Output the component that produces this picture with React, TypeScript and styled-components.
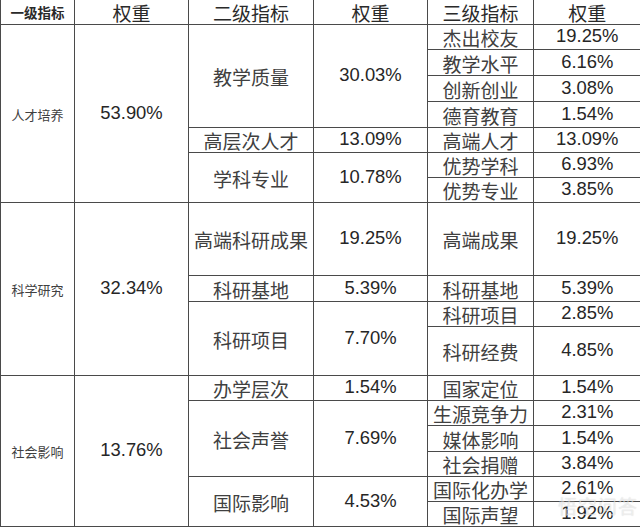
import React from "react";
import styled, { createGlobalStyle } from "styled-components";

const GlobalStyle = createGlobalStyle`
  html, body {
    margin: 0;
    padding: 0;
    background: #fff;
  }
  body {
    font-family: "Liberation Sans", "Noto Sans CJK SC", sans-serif;
  }
`;

const Root = styled.div`
  position: relative;
  width: 640px;
  height: 527px;
  overflow: hidden;
  background: #fff;
`;

const Table = styled.table`
  border-collapse: collapse;
  table-layout: fixed;
  width: 640px;
`;

const Row = styled.tr<{ $h: number }>`
  height: ${(p) => p.$h}px;
`;

const Cell = styled.td<{ $kind?: "small" | "text" | "num" }>`
  padding: ${(p) => (p.$kind === "num" ? "0" : "2px 0 0")};
  border: 1px solid #4a4a4a;
  text-align: center;
  vertical-align: middle;
  line-height: 1;
  white-space: nowrap;
  color: ${(p) => (p.$kind === "num" ? "#262626" : "#404040")};
  font-family: ${(p) =>
    p.$kind === "num"
      ? `"Liberation Sans", Arial, sans-serif`
      : `"Noto Sans CJK SC", "Liberation Sans", sans-serif`};
  font-size: ${(p) =>
    p.$kind === "small" ? "13px" : p.$kind === "num" ? "18.4px" : "19px"};
  tr > &:last-child {
    border-right: none;
  }
`;

const Head = styled.th<{ $small?: boolean }>`
  padding: 1px 0 0;
  border: 1px solid #4a4a4a;
  border-top: none;
  text-align: center;
  vertical-align: middle;
  line-height: 1;
  white-space: nowrap;
  color: #2a2a2a;
  font-family: "Noto Sans CJK SC", "Liberation Sans", sans-serif;
  font-weight: ${(p) => (p.$small ? 700 : 400)};
  font-size: ${(p) => (p.$small ? "13.5px" : "19px")};
  tr > &:last-child {
    border-right: none;
  }
`;

const Watermark = styled.div`
  position: absolute;
  right: 2px;
  bottom: 12px;
  font-family: "Noto Sans CJK SC", sans-serif;
  font-size: 19px;
  line-height: 1;
  color: rgba(255, 255, 255, 0.55);
  text-shadow: 0 0 1px rgba(0, 0, 0, 0.18);
  letter-spacing: 1px;
  pointer-events: none;
`;

const widths = [74, 114, 125, 114, 106, 107];

export default function App(): JSX.Element {
  return (
    <Root>
      <GlobalStyle />
      <Table>
        <colgroup>
          {widths.map((w, i) => (
            <col key={i} style={{ width: w }} />
          ))}
        </colgroup>
        <thead>
          <Row $h={24}>
            <Head $small>一级指标</Head>
            <Head>权重</Head>
            <Head>二级指标</Head>
            <Head>权重</Head>
            <Head>三级指标</Head>
            <Head>权重</Head>
          </Row>
        </thead>
        <tbody>
          <Row $h={25}>
            <Cell $kind="small" rowSpan={7}>人才培养</Cell>
            <Cell $kind="num" rowSpan={7}>53.90%</Cell>
            <Cell rowSpan={4}>教学质量</Cell>
            <Cell $kind="num" rowSpan={4}>30.03%</Cell>
            <Cell>杰出校友</Cell>
            <Cell $kind="num">19.25%</Cell>
          </Row>
          <Row $h={26}>
            <Cell>教学水平</Cell>
            <Cell $kind="num">6.16%</Cell>
          </Row>
          <Row $h={26}>
            <Cell>创新创业</Cell>
            <Cell $kind="num">3.08%</Cell>
          </Row>
          <Row $h={26}>
            <Cell>德育教育</Cell>
            <Cell $kind="num">1.54%</Cell>
          </Row>
          <Row $h={25}>
            <Cell>高层次人才</Cell>
            <Cell $kind="num">13.09%</Cell>
            <Cell>高端人才</Cell>
            <Cell $kind="num">13.09%</Cell>
          </Row>
          <Row $h={25}>
            <Cell rowSpan={2}>学科专业</Cell>
            <Cell $kind="num" rowSpan={2}>10.78%</Cell>
            <Cell>优势学科</Cell>
            <Cell $kind="num">6.93%</Cell>
          </Row>
          <Row $h={25}>
            <Cell>优势专业</Cell>
            <Cell $kind="num">3.85%</Cell>
          </Row>

          <Row $h={73}>
            <Cell $kind="small" rowSpan={4}>科学研究</Cell>
            <Cell $kind="num" rowSpan={4}>32.34%</Cell>
            <Cell>高端科研成果</Cell>
            <Cell $kind="num">19.25%</Cell>
            <Cell>高端成果</Cell>
            <Cell $kind="num">19.25%</Cell>
          </Row>
          <Row $h={26}>
            <Cell>科研基地</Cell>
            <Cell $kind="num">5.39%</Cell>
            <Cell>科研基地</Cell>
            <Cell $kind="num">5.39%</Cell>
          </Row>
          <Row $h={25}>
            <Cell rowSpan={2}>科研项目</Cell>
            <Cell $kind="num" rowSpan={2}>7.70%</Cell>
            <Cell>科研项目</Cell>
            <Cell $kind="num">2.85%</Cell>
          </Row>
          <Row $h={49}>
            <Cell>科研经费</Cell>
            <Cell $kind="num">4.85%</Cell>
          </Row>

          <Row $h={25}>
            <Cell $kind="small" rowSpan={6}>社会影响</Cell>
            <Cell $kind="num" rowSpan={6}>13.76%</Cell>
            <Cell>办学层次</Cell>
            <Cell $kind="num">1.54%</Cell>
            <Cell>国家定位</Cell>
            <Cell $kind="num">1.54%</Cell>
          </Row>
          <Row $h={25}>
            <Cell rowSpan={3}>社会声誉</Cell>
            <Cell $kind="num" rowSpan={3}>7.69%</Cell>
            <Cell>生源竞争力</Cell>
            <Cell $kind="num">2.31%</Cell>
          </Row>
          <Row $h={26}>
            <Cell>媒体影响</Cell>
            <Cell $kind="num">1.54%</Cell>
          </Row>
          <Row $h={25}>
            <Cell>社会捐赠</Cell>
            <Cell $kind="num">3.84%</Cell>
          </Row>
          <Row $h={25}>
            <Cell rowSpan={2}>国际影响</Cell>
            <Cell $kind="num" rowSpan={2}>4.53%</Cell>
            <Cell>国际化办学</Cell>
            <Cell $kind="num">2.61%</Cell>
          </Row>
          <Row $h={25}>
            <Cell>国际声望</Cell>
            <Cell $kind="num">1.92%</Cell>
          </Row>
        </tbody>
      </Table>
      <Watermark>悟空问答</Watermark>
    </Root>
  );
}
